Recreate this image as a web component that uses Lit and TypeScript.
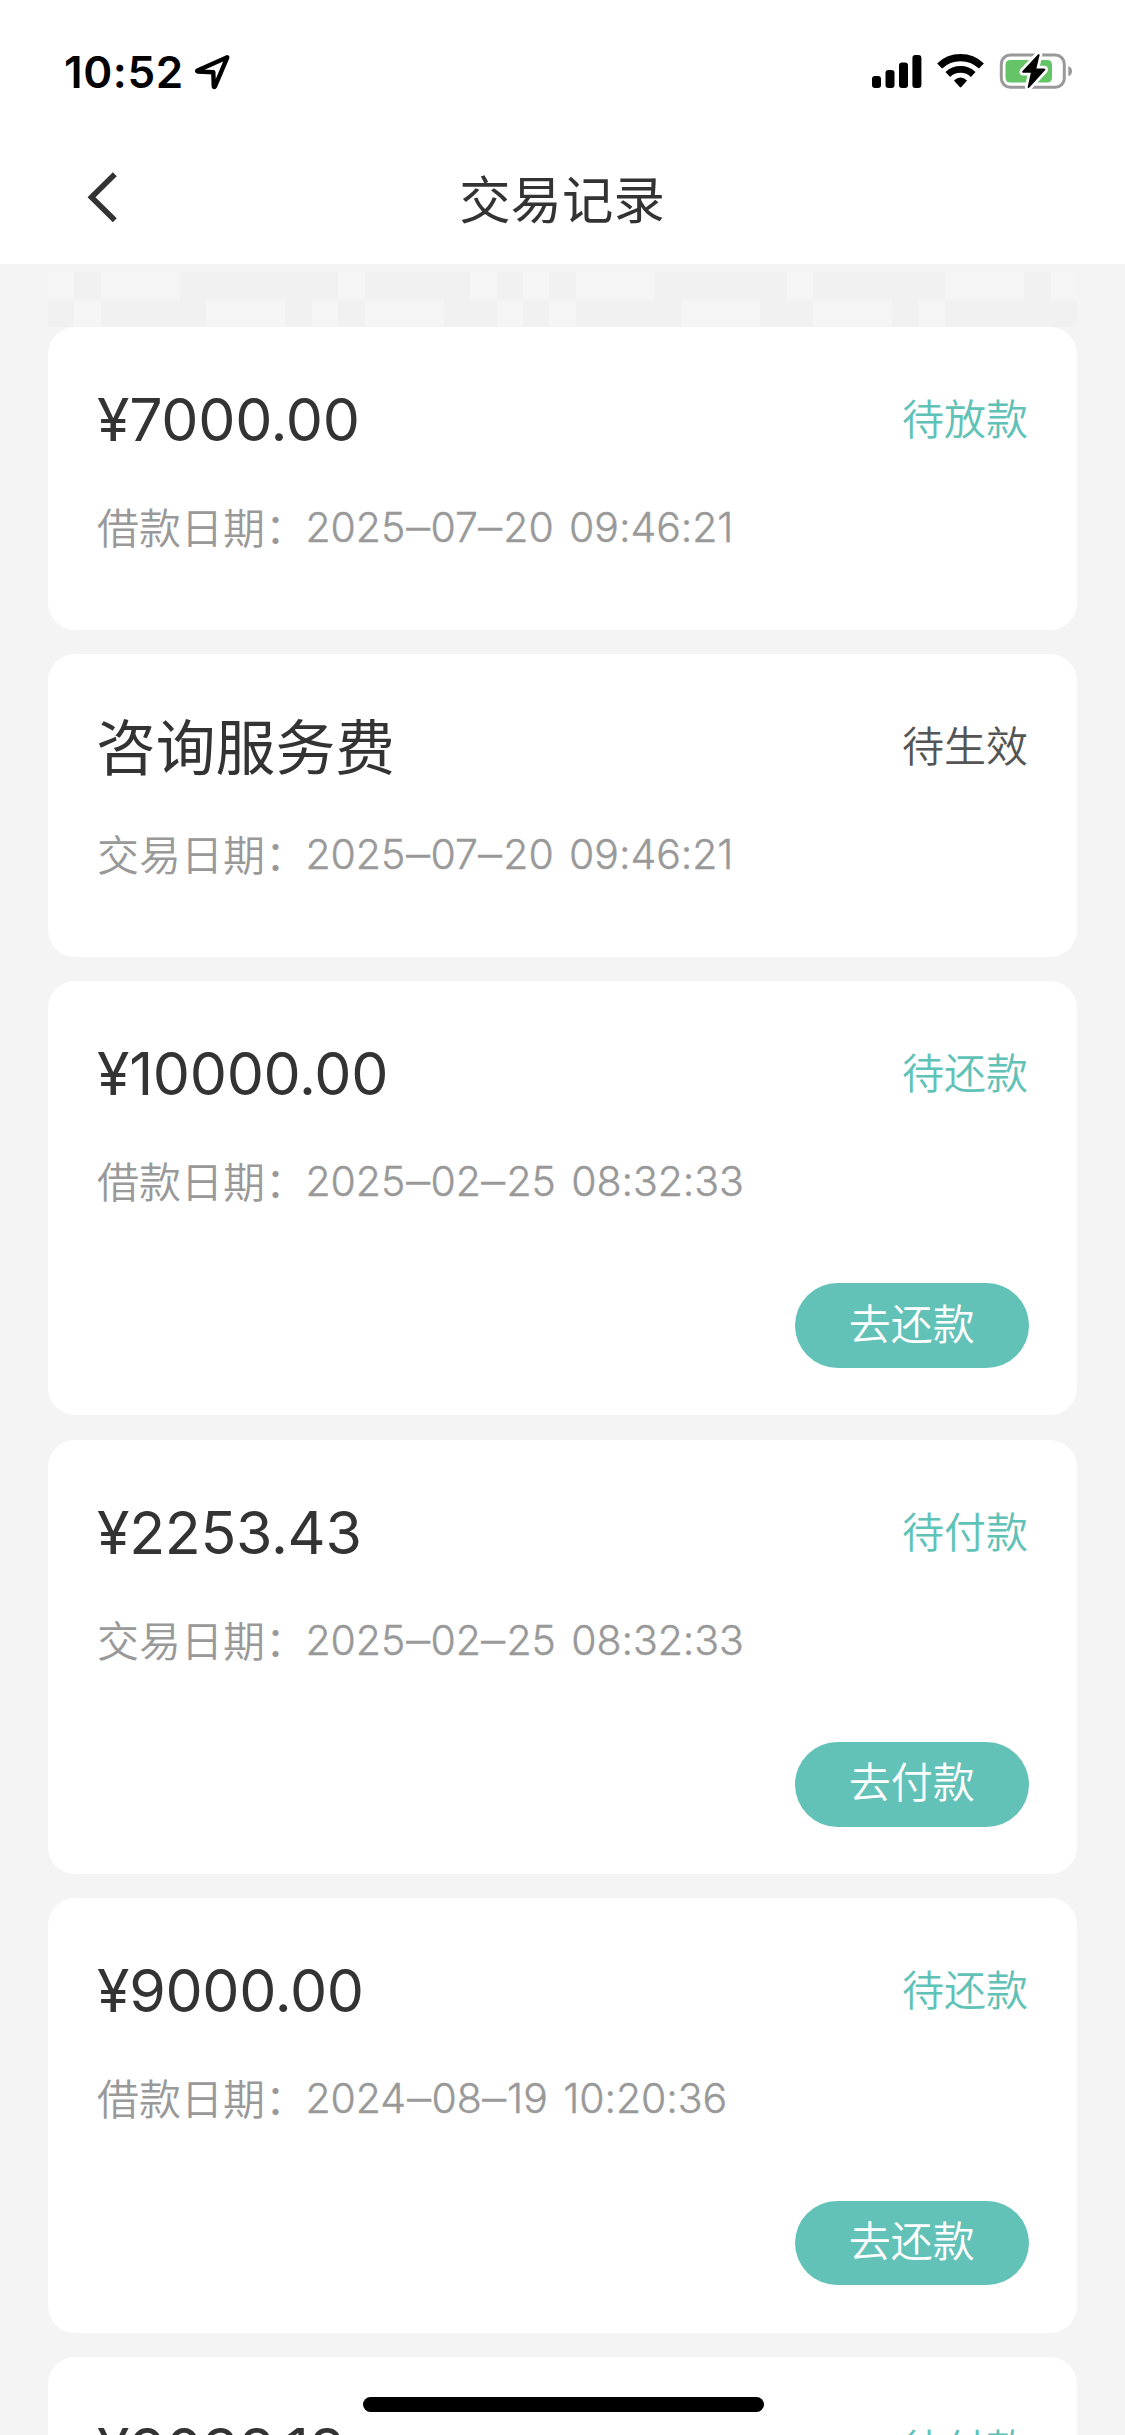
import { LitElement, html, css } from "lit";
import { customElement, property } from "lit/decorators.js";
import { classMap } from "lit/directives/class-map.js";

interface TradeRecord {
  title: string;
  cjk?: boolean;
  status: string;
  muted?: boolean;
  label: string;
  time: string;
  action?: string;
}

const RECORDS: TradeRecord[] = [
  { title: "¥7000.00", status: "待放款", label: "借款日期：", time: "2025–07–20 09:46:21" },
  { title: "咨询服务费", cjk: true, status: "待生效", muted: true, label: "交易日期：", time: "2025–07–20 09:46:21" },
  { title: "¥10000.00", status: "待还款", label: "借款日期：", time: "2025–02–25 08:32:33", action: "去还款" },
  { title: "¥2253.43", status: "待付款", label: "交易日期：", time: "2025–02–25 08:32:33", action: "去付款" },
  { title: "¥9000.00", status: "待还款", label: "借款日期：", time: "2024–08–19 10:20:36", action: "去还款" },
  { title: "¥9038.18", status: "待付款", label: "交易日期：", time: "2024–08–19 10:20:36", action: "去付款" },
];

// One character per mosaic cell; "#" is a shaded cell.
const MOSAIC = [
  ".#...######.####.#.#...#####.#####...#.",
  "#.####...#.#...##.#.####...##...#.#####",
];

@customElement("status-bar")
class StatusBar extends LitElement {
  static styles = css`
    :host { display: block; height: 140px; }
    .bar { display: flex; justify-content: space-between; align-items: flex-start; padding: 42px 50px 0 64px; }
    .left, .right { display: flex; align-items: center; height: 60px; }
    .time { font: 600 44px/60px Inter, "Liberation Sans", sans-serif; color: #000; letter-spacing: 0.6px; width: 128px; white-space: nowrap; }
    svg { display: block; }
  `;
  render() {
    return html`<div class="bar">
      <div class="left">
        <span class="time">10:52</span>
        <svg width="44" height="60" viewBox="192 42 44 60" fill="none">
          <path d="M227.3 57.3L197.5 70.4Q196.5 71.2 198 71.5L213.3 72.2L213.8 86.5Q214.2 87.6 215 86.3Z" stroke="#000" stroke-width="4.4" stroke-linejoin="round" />
        </svg>
      </div>
      <div class="right">
        <svg width="205" height="60" viewBox="870 42 205 60" fill="none">
          <g fill="#000">
            <rect x="872" y="76" width="9" height="12" rx="3" />
            <rect x="885.5" y="70" width="9" height="18" rx="3" />
            <rect x="899" y="62.5" width="9" height="25.5" rx="3" />
            <rect x="912.4" y="55" width="9" height="33" rx="3" />
          </g>
          <path d="M939.6 66A30.3 30.3 0 0 1 981.4 66" stroke="#000" stroke-width="7.2" />
          <path d="M947.8 74.4A18.6 18.6 0 0 1 973.2 74.4" stroke="#000" stroke-width="6.8" />
          <path d="M953.9 80.6Q960.5 74.4 967.1 80.6L961.3 87Q960.5 87.8 959.7 87Z" fill="#000" />
          <rect x="1001.3" y="55" width="63" height="32.3" rx="9" stroke="#999" stroke-width="3" />
          <path d="M1068.3 66.2Q1072 67.4 1072 71.2Q1072 75 1068.3 76.2Z" fill="#999" />
          <rect x="1005.5" y="60" width="46.5" height="22.6" rx="4.5" fill="#65c466" />
          <path d="M1038 54.5L1022.5 71Q1021.5 72.8 1023.5 72.8H1030.8L1027.6 87.2Q1028.2 88.6 1029.6 87.2L1045 70.3Q1046 68.6 1044 68.5H1036.4L1039.6 55Q1039.2 53.2 1038 54.5Z" fill="#000" stroke="#fff" stroke-width="5.5" paint-order="stroke" stroke-linejoin="round" />
        </svg>
      </div>
    </div>`;
  }
}

@customElement("record-card")
class RecordCard extends LitElement {
  @property({ attribute: false }) record!: TradeRecord;

  static styles = css`
    :host { display: block; }
    .card { box-sizing: border-box; height: 302.6px; padding: 48px 49px 0 49px; border-radius: 27px; background: #fff; }
    .card.tall { height: 434.3px; }
    .head { display: flex; justify-content: space-between; align-items: flex-start; height: 90px; }
    .title { color: #333; font: 400 59px/90px Inter, "Noto Sans CJK SC", sans-serif; letter-spacing: -0.3px; white-space: nowrap; }
    .title.cjk { font: 400 59.8px/85px "Noto Sans CJK SC", sans-serif; letter-spacing: 0; margin-left: -1px; }
    .status { color: #60c2b7; font: 350 42px/60px "Noto Sans CJK SC", sans-serif; margin-top: 12px; }
    .status.muted { color: #555; }
    .date { display: flex; align-items: flex-start; height: 60px; margin-top: 32px; color: #999; font: 350 42px/58px "Noto Sans CJK SC", sans-serif; white-space: nowrap; }
    .time { font: 300 41px/61px Inter, "Noto Sans CJK SC", sans-serif; -webkit-text-stroke: 0.4px #999; letter-spacing: -0.08px; word-spacing: 4px; margin-left: -1.5px; }
    .dash { display: inline-block; margin: 0 2.5px; transform: scaleX(1.16); }
    .foot { display: flex; justify-content: flex-end; margin-top: 72.3px; margin-right: -1px; }
    .btn { box-sizing: border-box; width: 234.5px; height: 84.5px; padding: 0 0 8px; border: 0; border-radius: 43px; background: #63c2b7; color: #fff; font: 350 42px/76px "Noto Sans CJK SC", sans-serif; text-align: center; }
  `;
  render() {
    const r = this.record;
    const parts = r.time.split("–");
    return html`<article class=${classMap({ card: true, tall: !!r.action })}>
      <div class="head">
        <span class=${classMap({ title: true, cjk: !!r.cjk })}>${r.title}</span>
        <span class=${classMap({ status: true, muted: !!r.muted })}>${r.status}</span>
      </div>
      <div class="date"><span>${r.label}</span><span class="time">${parts.map((p, i) => (i ? html`<span class="dash">–</span>${p}` : p))}</span></div>
      ${r.action ? html`<div class="foot"><button class="btn">${r.action}</button></div>` : null}
    </article>`;
  }
}

@customElement("app-root")
class AppRoot extends LitElement {
  static styles = css`
    :host { display: block; position: relative; width: 1125px; height: 2435px; overflow: hidden; background: #f4f4f4; }
    .top { height: 263.5px; background: #fff; }
    .nav { display: grid; grid-template-columns: 200px 1fr 200px; align-items: center; height: 114px; }
    .back { display: block; margin-left: 80px; }
    .name { margin: 0 1px 0 0; text-align: center; color: #333; font: 400 51.4px/76px "Noto Sans CJK SC", sans-serif; }
    .list { display: flex; flex-direction: column; padding: 8.8px 48px 0; }
    .mosaic { display: grid; grid-template-columns: repeat(39, 1fr); grid-auto-rows: 27.4px; }
    .cell { background: #f5f5f5; }
    .cell.on { background: #f1f1f1; }
    .cards { display: flex; flex-direction: column; gap: 24.4px; }
    .home { position: absolute; left: 362.5px; top: 2397px; width: 401px; height: 15px; border-radius: 8px; background: #000; }
  `;
  render() {
    return html`
      <div class="top">
        <status-bar></status-bar>
        <div class="nav">
          <svg class="back" width="44" height="60" viewBox="80 167 44 60" fill="none">
            <path d="M114.8 174.2L91.5 197.3L114.8 220.3" stroke="#333" stroke-width="5.6" />
          </svg>
          <h1 class="name">交易记录</h1>
        </div>
      </div>
      <div class="list">
        <div class="mosaic">
          ${MOSAIC.join("").split("").map((c) => html`<span class=${classMap({ cell: true, on: c === "#" })}></span>`)}
        </div>
        <div class="cards">
          ${RECORDS.map((r) => html`<record-card .record=${r}></record-card>`)}
        </div>
      </div>
      <div class="home"></div>
    `;
  }
}
